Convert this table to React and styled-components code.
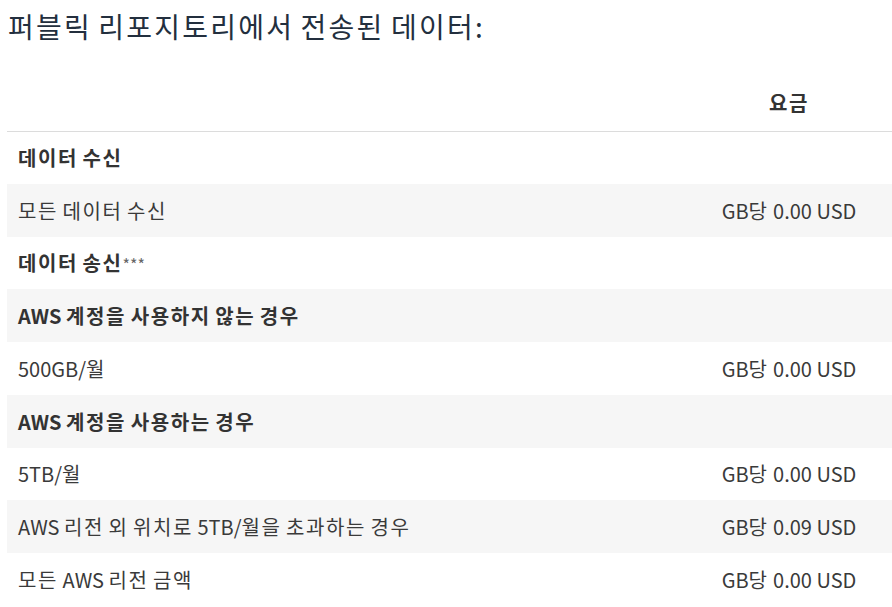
import React from "react";
import styled, { createGlobalStyle } from "styled-components";

const Global = createGlobalStyle`
  html, body { margin: 0; padding: 0; background: #fff; }
  body { font-family: "Noto Sans CJK KR", "Noto Sans CJK JP", sans-serif; color: #333; }
`;

const Page = styled.div`
  padding: 6px 0 0 7px;
  width: 885px;
`;

const Title = styled.h2`
  margin: 0;
  padding-left: 1px;
  height: 40px;
  font-size: 28px;
  font-weight: 400;
  line-height: 40px;
  color: #232f3e;
  white-space: nowrap;
`;

const Hangul = styled.span`
  letter-spacing: 0.08em;
`;

const Table = styled.table`
  width: 885px;
  margin-top: 24px;
  border-collapse: collapse;
  font-size: 20px;
`;

const HeadCell = styled.th`
  height: 61px;
  box-sizing: border-box;
  padding: 5px 11px 0;
  font-weight: 700;
  text-align: ${(p) => (p.$center ? "center" : "left")};
  width: ${(p) => p.$w || "auto"};
  border-bottom: 1px solid #dcdcdc;
  color: #333;
`;

const Row = styled.tr`
  background: ${(p) => (p.$shade ? "#f6f6f6" : "#fff")};
`;

const Cell = styled.td`
  height: 52.78px;
  padding: 0 11px;
  box-sizing: border-box;
  text-align: ${(p) => (p.$center ? "center" : "left")};
  font-weight: ${(p) => (p.$bold ? 700 : 400)};
  color: ${(p) => (p.$bold ? "#333" : "#3a3a3a")};
  white-space: nowrap;
`;

const Stars = styled.span`
  font-weight: 400;
  font-size: 16px;
  color: #666;
`;

function K({ text }) {
  const parts = text.split(/([\uAC00-\uD7A3]+)/);
  return parts.map((p, i) =>
    /[\uAC00-\uD7A3]/.test(p) ? <Hangul key={i}>{p}</Hangul> : p
  );
}

const rows = [
  { label: "데이터 수신", bold: true },
  { label: "모든 데이터 수신", price: "GB당 0.00 USD" },
  { label: "데이터 송신", bold: true, stars: true },
  { label: "AWS 계정을 사용하지 않는 경우", bold: true },
  { label: "500GB/월", price: "GB당 0.00 USD" },
  { label: "AWS 계정을 사용하는 경우", bold: true },
  { label: "5TB/월", price: "GB당 0.00 USD" },
  { label: "AWS 리전 외 위치로 5TB/월을 초과하는 경우", price: "GB당 0.09 USD" },
  { label: "모든 AWS 리전 금액", price: "GB당 0.00 USD" },
];

export default function App() {
  return (
    <>
      <Global />
      <Page>
        <Title>
          <K text="퍼블릭 리포지토리에서 전송된 데이터:" />
        </Title>
        <Table>
          <thead>
            <tr>
              <HeadCell></HeadCell>
              <HeadCell $center $w="206px">
                <K text="요금" />
              </HeadCell>
            </tr>
          </thead>
          <tbody>
            {rows.map((r, i) => (
              <Row key={i} $shade={i % 2 === 1}>
                <Cell $bold={r.bold}>
                  <K text={r.label} />
                  {r.stars && <Stars>***</Stars>}
                </Cell>
                <Cell $center>{r.price ? <K text={r.price} /> : ""}</Cell>
              </Row>
            ))}
          </tbody>
        </Table>
      </Page>
    </>
  );
}
